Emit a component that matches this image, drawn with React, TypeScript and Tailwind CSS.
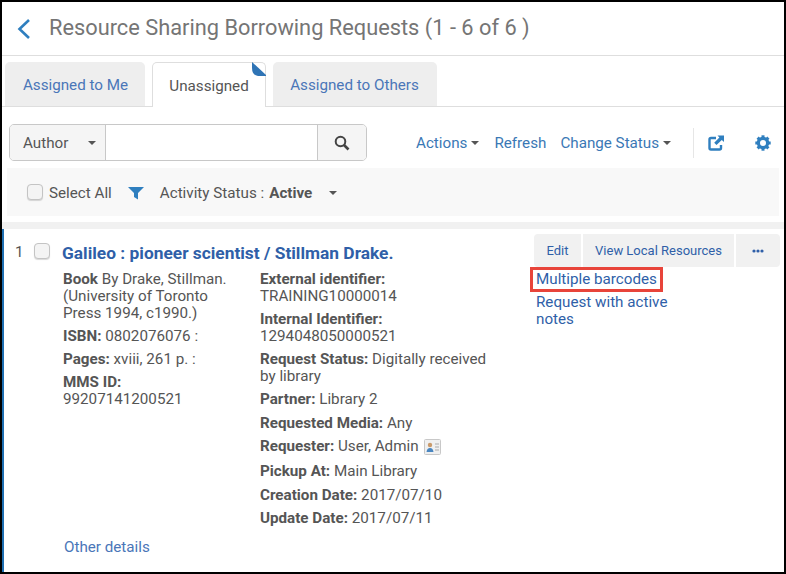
import React from "react";

const Caret = ({ className = "" }: { className?: string }) => (
  <span className={`inline-block w-0 h-0 border-x-[4px] border-x-transparent border-t-[4px] border-t-[#555] ${className}`} />
);

const Check = ({ className = "" }: { className?: string }) => (
  <span className={`block w-4 h-4 border border-[#c4c4c4] rounded-[4px] bg-[#f4f4f4] shadow-[0_1px_1px_rgba(0,0,0,0.15)] ${className}`} />
);

const Field = ({ label, children, className = "" }: { label: string; children?: React.ReactNode; className?: string }) => (
  <div className={className}>
    <b className="font-bold">{label}</b> {children}
  </div>
);

export default function App() {
  return (
    <div className="w-[786px] h-[574px] overflow-hidden bg-white border-2 border-black font-['Roboto',sans-serif] text-[15.2px] leading-[17px] text-[#555] flex flex-col">
      <header className="h-[54px] shrink-0 border-b border-[#dedede] flex items-center pl-[14px]">
        <svg width="16" height="22" viewBox="0 0 16 22" fill="none" stroke="#2f7fbf" strokeWidth="2.6">
          <path d="M13 2 L3.5 11 L13 20" />
        </svg>
        <h1 className="ml-[17px] text-[21.8px] leading-none font-normal text-[#757575] relative top-[-1px]">
          Resource Sharing Borrowing Requests (1 - 6 of 6 )
        </h1>
      </header>

      <nav className="h-[51px] shrink-0 flex items-end gap-[7px] pl-[3px] border-b border-[#dedede] text-[#4a76b8]">
        <a className="w-[140px] h-[44px] pt-[2px] pl-[1px] bg-[#eeeeee] rounded-t-[5px] flex items-center justify-center">Assigned to Me</a>
        <a className="relative w-[114px] h-[45px] pt-[2px] -mb-px bg-white border border-b-0 border-[#dedede] rounded-t-[5px] flex items-center justify-center text-[#555]">
          Unassigned
          <svg className="absolute right-[-1px] top-[-1px]" width="14" height="14" viewBox="0 0 14 14">
            <path d="M0 0 L14 13 L14 14 L6 14 Q0 13 0 6 Z" fill="#2f74b5" />
          </svg>
        </a>
        <a className="w-[164px] h-[44px] pt-[2px] pr-[1px] bg-[#eeeeee] rounded-t-[5px] flex items-center justify-center">Assigned to Others</a>
      </nav>

      <section className="h-[61px] shrink-0 flex items-start pl-[7px] pt-[17px]">
        <div className="w-[358px] h-[37px] flex border border-[#c8c8c8] rounded-[5px] overflow-hidden">
          <div className="w-[96px] pt-[1px] bg-[#f5f5f5] border-r border-[#c8c8c8] flex items-center pl-[13px] text-[#555]">
            Author
            <Caret className="ml-[20px]" />
          </div>
          <div className="flex-1 bg-white" />
          <div className="w-[49px] bg-[#f5f5f5] border-l border-[#c8c8c8] flex items-center justify-center">
            <svg width="16" height="16" viewBox="0 0 16 16" fill="none" stroke="#444" strokeWidth="2">
              <circle cx="6.5" cy="6.5" r="4.8" />
              <path d="M10 10 L14.5 14.5" strokeWidth="2.6" />
            </svg>
          </div>
        </div>
        <div className="ml-[49px] h-[37px] pt-[1px] flex items-center text-[#3a78b5]">
          <span>Actions</span>
          <Caret className="ml-[4px] border-t-[#3a78b5]" />
          <span className="ml-[15px]">Refresh</span>
          <span className="ml-[14px]">Change Status</span>
          <Caret className="ml-[4px] border-t-[#3a78b5]" />
          <span className="ml-[22px] w-px h-[30px] bg-[#e6e6e6]" />
          <svg className="ml-[14px]" width="16" height="16" viewBox="0 0 16 16" fill="none">
            <path d="M8 3 H3 Q1.5 3 1.5 4.5 V13 Q1.5 14.5 3 14.5 H11.5 Q13 14.5 13 13 V10" stroke="#2f7fbf" strokeWidth="2.4" />
            <path d="M9.5 0.5 H16 V7 L13.8 4.9 L8.5 10 L6.2 7.7 L11.4 2.5 Z" fill="#2f7fbf" />
          </svg>
          <svg className="ml-[31px]" width="16" height="16" viewBox="0 0 16 16">
            <circle cx="8" cy="8" r="4.6" fill="none" stroke="#2f7fbf" strokeWidth="3.2" />
            <g stroke="#2f7fbf" strokeWidth="3">
              <path d="M8 0.3 V3" />
              <path d="M8 13 V15.7" />
              <path d="M0.3 8 H3" />
              <path d="M13 8 H15.7" />
              <path d="M2.6 2.6 L4.4 4.4" />
              <path d="M11.6 11.6 L13.4 13.4" />
              <path d="M2.6 13.4 L4.4 11.6" />
              <path d="M11.6 4.4 L13.4 2.6" />
            </g>
          </svg>
        </div>
      </section>

      <section className="ml-[5px] mr-[5px] h-[48px] pt-[2px] shrink-0 bg-[#f8f8f8] flex items-center pl-[20px]">
        <Check className="relative top-[-1px]" />
        <span className="ml-[6px]">Select All</span>
        <svg className="ml-[16px]" width="16" height="14" viewBox="0 0 16 14">
          <path d="M0 1 H16 L10 7 V13.5 L6 11 V7 Z" fill="#2f7fbf" />
        </svg>
        <span className="ml-[16px]">Activity Status :</span>
        <b className="ml-[5px] font-bold">Active</b>
        <Caret className="ml-[17px]" />
      </section>

      <div className="h-[6px] shrink-0" />
      <div className="h-[7px] shrink-0 bg-[#f1f1f1]" />

      <main className="flex-1 min-h-0 border-l-2 border-[#1f6fb2] flex">
        <div className="w-[59px] shrink-0 flex items-start pt-[15px] pl-[11px]">
          <span className="w-[19px] leading-[17px]">1</span>
          <Check className="relative top-[-1px]" />
        </div>

        <div className="w-[471px] shrink-0 pt-[14px]">
          <h2 className="text-[17.35px] leading-[20px] font-bold text-[#2f5fa8] -ml-[1px]">Galileo : pioneer scientist / Stillman Drake.</h2>
          <div className="flex mt-[8px]">
            <div className="w-[197px] shrink-0 flex flex-col gap-[6px]">
              <Field label="Book" className="w-[170px]">By Drake, Stillman. (University of Toronto Press 1994, c1990.)</Field>
              <Field label="ISBN:">0802076076 :</Field>
              <Field label="Pages:">xviii, 261 p. :</Field>
              <Field label="MMS ID:" className="w-[130px]">99207141200521</Field>
            </div>
            <div className="w-[235px] shrink-0 flex flex-col gap-[6px]">
              <Field label="External identifier:" className="w-[170px]">TRAINING10000014</Field>
              <Field label="Internal Identifier:" className="w-[170px]">1294048050000521</Field>
              <Field label="Request Status:">Digitally received by library</Field>
              <Field label="Partner:">Library 2</Field>
              <Field label="Requested Media:" className="mt-[1px]">Any</Field>
              <div className="flex items-center h-[17px]">
                <Field label="Requester:">User, Admin</Field>
                <svg className="ml-[5px] mt-[1px]" width="17" height="16" viewBox="0 0 17 16">
                  <rect x="0.5" y="0.5" width="16" height="15" rx="1" fill="#f0f0f0" stroke="#c8c8c8" />
                  <circle cx="6" cy="6" r="2.2" fill="#c99a6b" />
                  <path d="M2.5 13 Q3 9 6 9 Q9 9 9.5 13 Z" fill="#4a86c0" />
                  <path d="M11 5 H15 M11 8 H15 M11 11 H15" stroke="#aaa" />
                </svg>
              </div>
              <Field label="Pickup At:" className="mt-[2px]">Main Library</Field>
              <Field label="Creation Date:" className="mt-[1px]">2017/07/10</Field>
              <Field label="Update Date:">2017/07/11</Field>
            </div>
          </div>
          <a className="block mt-[12px] ml-[1px] text-[#4a76b8]">Other details</a>
        </div>

        <div className="flex-1 pt-[5px] text-[#2f5fa8]">
          <div className="flex gap-[2px] h-[33px] text-[13px]">
            <span className="w-[47px] bg-[#f1f1f1] rounded-l-[4px] flex items-center justify-center">Edit</span>
            <span className="w-[151px] bg-[#f1f1f1] flex items-center justify-center">View Local Resources</span>
            <span className="w-[44px] bg-[#f1f1f1] rounded-r-[4px] flex items-center justify-center relative">
              <svg width="12" height="4" viewBox="0 0 12 4" fill="#2f5fa8">
                <circle cx="2" cy="2" r="1.6" />
                <circle cx="6" cy="2" r="1.6" />
                <circle cx="10" cy="2" r="1.6" />
              </svg>
            </span>
          </div>
          <div className="w-[133px] h-[25px] -ml-[4px] border-[3px] border-[#e8443a] flex items-center pl-[3px] whitespace-nowrap">
            Multiple barcodes
          </div>
          <div className="w-[150px] mt-[2px] ml-[2px]">Request with active notes</div>
        </div>
      </main>
    </div>
  );
}
